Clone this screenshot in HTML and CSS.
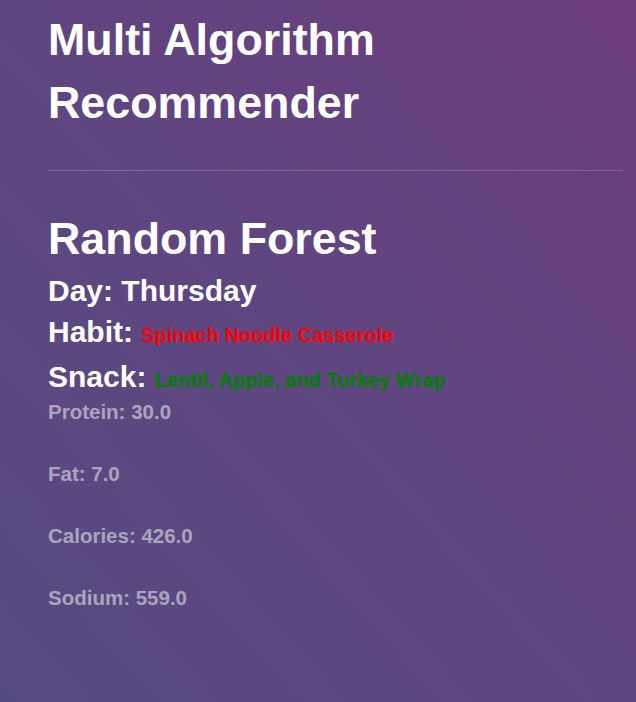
FILE: index.html
```html
<!DOCTYPE html>
<html>
<head>
<meta charset="utf-8">
<link rel="stylesheet" href="styles.css">
</head>
<body>
<div class="page">
  <h1 class="title">Multi Algorithm Recommender</h1>
  <hr class="rule">
  <section class="result">
    <h1 class="algo">Random Forest</h1>
    <h2 class="line">Day: Thursday</h2>
    <h2 class="line">Habit: <span class="habit">Spinach Noodle Casserole</span></h2>
    <h2 class="line">Snack: <span class="snack">Lentil, Apple, and Turkey Wrap</span></h2>
    <p class="stat">Protein: 30.0</p>
    <p class="stat">Fat: 7.0</p>
    <p class="stat">Calories: 426.0</p>
    <p class="stat">Sodium: 559.0</p>
  </section>
</div>
</body>
</html>
```
FILE: styles.css
```css
html, body {
  margin: 0;
  padding: 0;
  height: 100%;
}
body {
  background: linear-gradient(to top right, #564b80 0%, #5f4680 50%, #6c3c7c 100%);
  font-family: "Liberation Sans", Arial, Helvetica, sans-serif;
  color: #ffffff;
}
.page {
  padding: 8px 13px 0 48px;
}
.title {
  margin: 0;
  font-size: 44.8px;
  line-height: 63px;
  font-weight: bold;
}
.rule {
  margin: 36px 0 0 0;
  border: 0;
  height: 1px;
  background: rgba(255, 255, 255, 0.18);
}
.result {
  padding-top: 40px;
}
.algo {
  margin: 0;
  font-size: 44.8px;
  line-height: 54px;
  font-weight: bold;
}
.line {
  margin: 0;
  font-size: 30px;
  line-height: 41px;
  font-weight: bold;
}
.line:first-of-type {
  margin-top: 5px;
}
.habit {
  color: #ff0000;
  font-size: 20px;
}
.snack {
  color: #008000;
  font-size: 20px;
}
.stat {
  margin: 0 0 38px 0;
  font-size: 20.5px;
  line-height: 24px;
  font-weight: bold;
  color: rgba(255, 255, 255, 0.5);
}
.line + .stat {
  margin-top: -1px;
}
```
